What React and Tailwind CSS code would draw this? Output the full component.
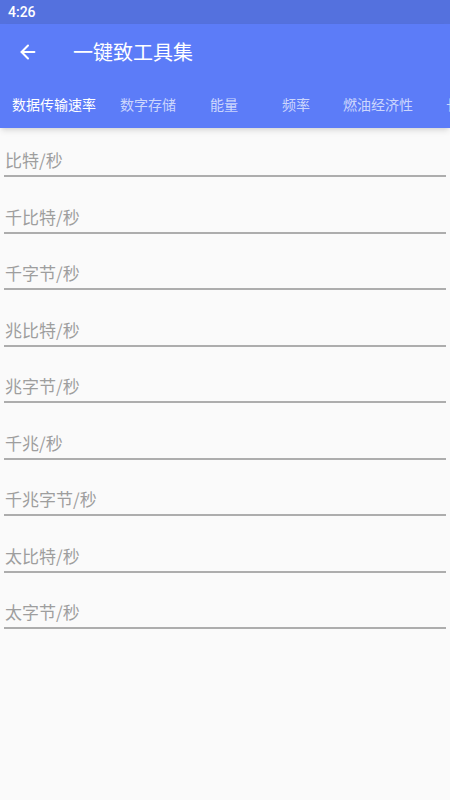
import { ArrowLeft } from 'lucide-react';

const tabs = [
  { name: '数据传输速率', w: 'w-[108px]', active: true },
  { name: '数字存储', w: 'w-[80px]' },
  { name: '能量', w: 'w-[72px]' },
  { name: '频率', w: 'w-[72px]' },
  { name: '燃油经济性', w: 'w-[92px]' },
  { name: '长度', w: 'w-[72px]' },
];

const units = ['比特/秒', '千比特/秒', '千字节/秒', '兆比特/秒', '兆字节/秒', '千兆/秒', '千兆字节/秒', '太比特/秒', '太字节/秒'];

export default function App() {
  return (
    <div className="w-[450px] h-[800px] bg-[#fafafa] overflow-hidden flex flex-col font-['Roboto','Noto_Sans_CJK_SC',sans-serif]">
      {/* status bar */}
      <div className="h-[24px] bg-[#5471de] flex items-center px-[8px] text-white text-[14px] font-medium">4:26</div>

      {/* app bar + tabs */}
      <div className="bg-[#5c7cf8] shadow-md relative z-10">
        <div className="h-[56px] flex items-center">
          <ArrowLeft className="w-[22px] h-[22px] text-white ml-[17px]" strokeWidth={2.2} />
          <span className="ml-[34px] text-white text-[20px] font-['Noto_Sans_CJK_SC',sans-serif]">一键致工具集</span>
        </div>
        <div className="h-[48px] flex overflow-hidden">
          {tabs.map((t) => (
            <div
              key={t.name}
              className={`${t.w} shrink-0 flex items-center justify-center text-[14px] whitespace-nowrap font-['Noto_Sans_CJK_SC',sans-serif] ${t.active ? 'text-white' : 'text-white/70'}`}
            >
              {t.name}
            </div>
          ))}
        </div>
      </div>

      {/* fields */}
      <div className="flex flex-col gap-[7.5px] mx-[4px]">
        {units.map((u) => (
          <div key={u} className="h-[49px] flex items-end border-b-2 border-[#adadad] pb-[3px] pl-[1px]">
            <span className="text-[17px] leading-[24px] text-[#9e9e9e] font-['Noto_Sans_CJK_SC',sans-serif]">{u}</span>
          </div>
        ))}
      </div>
    </div>
  );
}
